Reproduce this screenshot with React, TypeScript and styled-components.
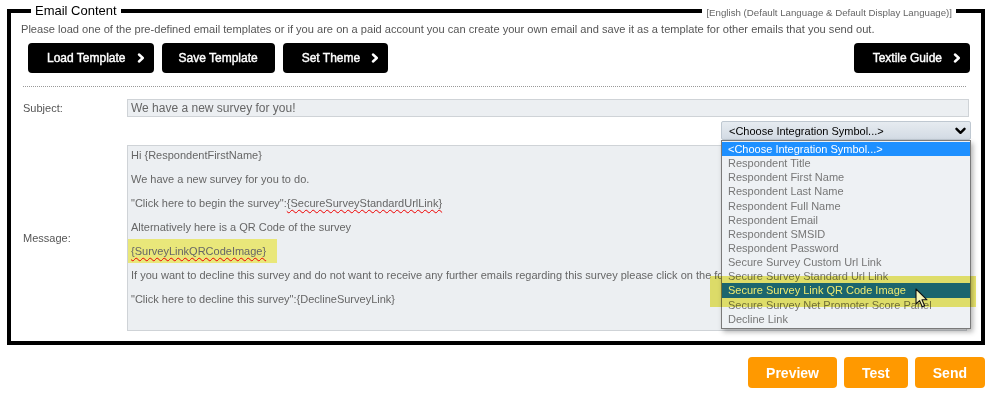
import styled, { createGlobalStyle } from "styled-components";

const GlobalStyle = createGlobalStyle`
  html, body {
    margin: 0;
    padding: 0;
    background: #fff;
    font-family: "Liberation Sans", Arial, sans-serif;
  }
`;

const symbols = [
  "<Choose Integration Symbol...>",
  "Respondent Title",
  "Respondent First Name",
  "Respondent Last Name",
  "Respondent Full Name",
  "Respondent Email",
  "Respondent SMSID",
  "Respondent Password",
  "Secure Survey Custom Url Link",
  "Secure Survey Standard Url Link",
  "Secure Survey Link QR Code Image",
  "Secure Survey Net Promoter Score Panel",
  "Decline Link",
];

const Chevron = ({ size = 10 }: { size?: number }) => (
  <svg width={size} height={size} viewBox="0 0 10 10">
    <path d="M3 1.5 L6.8 5 L3 8.5" fill="none" stroke="currentColor" strokeWidth="2.4" strokeLinecap="round" strokeLinejoin="round" />
  </svg>
);

const ChevronDown = () => (
  <svg width="11" height="8" viewBox="0 0 11 8">
    <path d="M1.5 1.8 L5.5 5.8 L9.5 1.8" fill="none" stroke="#000" strokeWidth="2.4" strokeLinecap="round" strokeLinejoin="round" />
  </svg>
);

const Cursor = () => (
  <svg width="14" height="21" viewBox="0 0 14 21">
    <path d="M1 1 L1 16 L4.6 12.6 L7.2 18.8 L9.6 17.8 L7 11.8 L12 11.8 Z" fill="#f6f3b8" stroke="#111" strokeWidth="1.1" strokeLinejoin="round" />
  </svg>
);

const App = () => {
  return (
    <Page>
      <GlobalStyle />
      <Fieldset>
        <Legend>Email Content</Legend>
        <LangTag>[English (Default Language &amp; Default Display Language)]</LangTag>
        <Intro>
          Please load one of the pre-defined email templates or if you are on a paid account you can create your own email and save it as a template for other emails that you send out.
        </Intro>
        <Toolbar>
          <DarkButton>
            Load Template <Chevron />
          </DarkButton>
          <DarkButton $plain>Save Template</DarkButton>
          <DarkButton>
            Set Theme <Chevron />
          </DarkButton>
          <DarkButton $pushRight>
            Textile Guide <Chevron />
          </DarkButton>
        </Toolbar>
        <Separator />
        <FormGrid>
          <Label>Subject:</Label>
          <SubjectInput>We have a new survey for you!</SubjectInput>
          <span />
          <SelectWrap>
            <SelectBox>
              <span>&lt;Choose Integration Symbol...&gt;</span>
              <ChevronDown />
            </SelectBox>
            <OptionList>
              {symbols.map((s, i) => (
                <Option key={s} $active={i === 0} $hover={i === 10}>
                  {s}
                </Option>
              ))}
            </OptionList>
            <Marker />
            <CursorSpot>
              <Cursor />
            </CursorSpot>
          </SelectWrap>
          <Label $middle>Message:</Label>
          <MessageBox>
            <p>Hi {"{RespondentFirstName}"}</p>
            <p>We have a new survey for you to do.</p>
            <p>
              "Click here to begin the survey":<Misspelt>{"{SecureSurveyStandardUrlLink}"}</Misspelt>
            </p>
            <p>Alternatively here is a QR Code of the survey</p>
            <p>
              <TextMark>
                <Misspelt>{"{SurveyLinkQRCodeImage}"}</Misspelt>
              </TextMark>
            </p>
            <p>
              If you want to decline this survey and do not want to receive any further emails regarding this survey please click on the following link
            </p>
            <p>"Click here to decline this survey":{"{DeclineSurveyLink}"}</p>
          </MessageBox>
        </FormGrid>
      </Fieldset>
      <Actions>
        <OrangeButton>Preview</OrangeButton>
        <OrangeButton>Test</OrangeButton>
        <OrangeButton>Send</OrangeButton>
      </Actions>
    </Page>
  );
};

export default App;

const Page = styled.div`
  width: 989px;
  height: 395px;
  box-sizing: border-box;
  padding: 3px 4px 0 7px;
  overflow: hidden;
`;

const Fieldset = styled.fieldset`
  position: relative;
  margin: 0;
  border: 4px solid #000;
  padding: 0 10px 10px 10px;
  min-width: 0;
`;

const Legend = styled.legend`
  margin-left: 10px;
  padding: 0 4px;
  font-size: 13px;
  line-height: 15px;
  color: #000;
`;

const LangTag = styled.span`
  position: absolute;
  top: -11px;
  right: 25px;
  padding: 0 4px;
  background: #fff;
  color: #666;
  font-size: 9.7px;
  line-height: 12px;
`;

const Intro = styled.p`
  margin: 4px 0 0 0;
  font-size: 11.1px;
  line-height: 14px;
  color: #555;
  white-space: nowrap;
`;

const Toolbar = styled.div`
  display: flex;
  gap: 8px;
  margin-top: 7px;
  padding: 0 1px 0 7px;
`;

const DarkButton = styled.button<{ $plain?: boolean; $pushRight?: boolean }>`
  display: flex;
  align-items: center;
  gap: 10px;
  height: 30px;
  padding: ${(p) => (p.$plain ? "0 17px" : "0 8px 0 19px")};
  margin-left: ${(p) => (p.$pushRight ? "auto" : "0")};
  border: none;
  border-radius: 4px;
  background: #000;
  color: #fff;
  font-family: "Liberation Sans", Arial, sans-serif;
  font-size: 12px;
  font-weight: normal;
  -webkit-text-stroke: 0.4px #fff;
  cursor: pointer;
`;

const Separator = styled.hr`
  margin: 13px 5px 0 2px;
  border: none;
  border-top: 1px dotted #999;
`;

const FormGrid = styled.div`
  display: grid;
  grid-template-columns: 104px 1fr;
  row-gap: 4px;
  margin-top: 12px;
  padding-left: 2px;
`;

const Label = styled.div<{ $middle?: boolean }>`
  font-size: 11px;
  line-height: 18px;
  color: #555;
  align-self: ${(p) => (p.$middle ? "center" : "start")};
`;

const SubjectInput = styled.div`
  height: 18px;
  box-sizing: border-box;
  margin-right: 2px;
  padding: 0 3px;
  border: 1px solid #cfd3d7;
  background: #eceff2;
  font-size: 12px;
  line-height: 16px;
  color: #666;
`;

const SelectWrap = styled.div`
  position: relative;
  justify-self: end;
  width: 250px;
`;

const SelectBox = styled.div`
  display: flex;
  align-items: center;
  justify-content: space-between;
  height: 19px;
  box-sizing: border-box;
  padding: 0 4px 0 7px;
  border: 1px solid #bfc8d1;
  border-radius: 2px;
  background: linear-gradient(#e6ebf0, #d3dbe4);
  font-size: 11px;
  color: #000;
`;

const OptionList = styled.ul`
  position: absolute;
  top: 19px;
  left: 0;
  z-index: 2;
  width: 100%;
  box-sizing: border-box;
  margin: 0;
  padding: 1px 0 2px;
  list-style: none;
  border: 1px solid #7a7a7a;
  background: #eef1f4;
  box-shadow: 2px 3px 5px rgba(0, 0, 0, 0.3);
`;

const Option = styled.li<{ $active?: boolean; $hover?: boolean }>`
  height: 14.15px;
  padding: 0 6px;
  font-size: 11px;
  line-height: 14px;
  white-space: nowrap;
  color: ${(p) => (p.$active || p.$hover ? "#fff" : "#777")};
  background: ${(p) => (p.$active ? "#1e90ff" : p.$hover ? "#1c6eff" : "transparent")};
`;

const Marker = styled.div`
  position: absolute;
  z-index: 3;
  top: 155px;
  left: -11px;
  width: 266px;
  height: 31px;
  background: #eeea6e;
  mix-blend-mode: multiply;
  pointer-events: none;
`;

const CursorSpot = styled.div`
  position: absolute;
  z-index: 4;
  top: 167px;
  left: 194px;
  line-height: 0;
`;

const MessageBox = styled.div`
  height: 186px;
  box-sizing: border-box;
  margin-top: 1px;
  margin-right: 4px;
  padding: 2px 3px;
  border: 1px solid #cfd3d7;
  background: #eceff2;
  font-size: 11px;
  color: #666;
  white-space: nowrap;
  overflow: hidden;

  p {
    margin: 0 0 10px;
    line-height: 14px;
  }
`;

const Misspelt = styled.span`
  text-decoration: underline wavy #e00;
  text-decoration-thickness: 1px;
  text-underline-offset: 2px;
`;

const TextMark = styled.span`
  display: inline-block;
  margin: -5px 0 -5px -6px;
  padding: 5px 11px 5px 6px;
  background: #e9e77a;
`;

const Actions = styled.div`
  display: flex;
  justify-content: flex-end;
  gap: 7px;
  margin-top: 12px;
`;

const OrangeButton = styled.button`
  height: 31px;
  padding: 0 18px;
  border: none;
  border-radius: 4px;
  background: #ff9900;
  color: #fff;
  font-family: "Liberation Sans", Arial, sans-serif;
  font-size: 14px;
  font-weight: bold;
  cursor: pointer;
`;
